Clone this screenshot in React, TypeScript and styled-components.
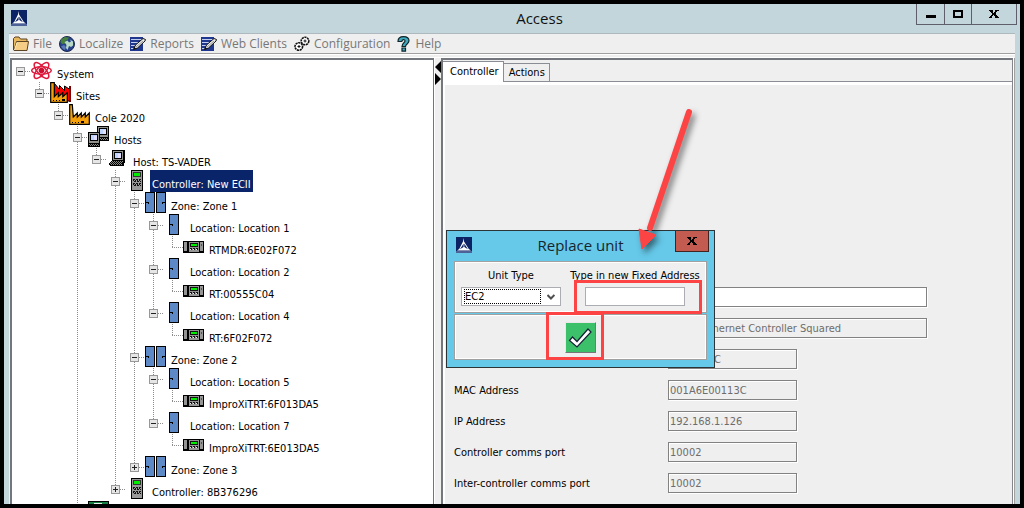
import React from "react";
import styled, { createGlobalStyle, css } from "styled-components";

const ui = '"DejaVu Sans Condensed", "DejaVu Sans", sans-serif';
const chrome = '"Open Sans", "Noto Sans", sans-serif';
const dots = "#8c8c8c";

const GlobalStyle = createGlobalStyle`
  * { box-sizing: border-box; }
  body { margin: 0; background: #000; font-family: ${ui}; font-size: 11px; color: #000; }
  button, input, select { font: inherit; color: inherit; }
`;

const Frame = styled.div`
  position: relative;
  display: flex;
  flex-direction: column;
  height: 100vh;
  border: 4px solid #000;
  background: #c3d6dc;
  overflow: hidden;
`;

const TitleBar = styled.header`
  display: flex;
  align-items: flex-start;
  height: 29px;
  flex: none;
  padding: 0 3px 0 7px;
`;

const TitleLogo = styled.div`
  display: flex;
  padding-top: 6px;
`;

const Title = styled.h1`
  flex: 1;
  margin: 0;
  padding-left: 136px;
  font: 400 15px/29px ${chrome};
  text-align: center;
  color: #111;
`;

const WindowButtons = styled.div`
  display: flex;
  border: 1px solid #5f5f6b;
  border-top: 0;
`;

const WindowButton = styled.button<{ $wide?: boolean }>`
  display: flex;
  align-items: center;
  justify-content: center;
  width: ${(p) => (p.$wide ? 45 : 27)}px;
  height: 20px;
  padding: 0;
  border: 0;
  background: transparent;
  & + & { border-left: 1px solid #5f5f6b; }
`;

const Client = styled.div`
  display: flex;
  flex-direction: column;
  flex: 1;
  min-height: 0;
  margin: 0 5px;
  background: #efefef;
`;

const MenuBar = styled.nav`
  display: flex;
  align-items: center;
  gap: 7px;
  height: 21px;
  flex: none;
  padding-left: 4px;
  border-top: 1px solid #aeb8bf;
  border-bottom: 1px solid #a0a0a0;
  box-shadow: 0 1px #fff;
`;

const MenuButton = styled.button`
  display: flex;
  align-items: center;
  gap: 4px;
  padding: 0;
  border: 0;
  background: transparent;
  font: 12px/18px ${chrome};
  color: #777;
`;

const Split = styled.div`
  display: grid;
  grid-template-columns: 424px 7px minmax(0, 1fr);
  flex: 1;
  min-height: 0;
  margin: 3px 1px 0;
  border-top: 1px solid #fff;
`;

const TreePanel = styled.div`
  overflow: hidden;
  padding-left: 4px;
  border: 2px solid #74767d;
  border-right-width: 1px;
  border-bottom: 0;
  background: #fff;
`;

const Splitter = styled.div`
  display: flex;
  flex-direction: column;
  padding-top: 3px;
  border-left: 1px solid #fff;
`;

const Branch = styled.ul<{ $line?: boolean; $root?: boolean }>`
  list-style: none;
  margin: 0;
  padding: 0 0 0 ${(p) => (p.$root ? 0 : 19)}px;
  ${(p) =>
    p.$line &&
    css`
      background: repeating-linear-gradient(to bottom, ${dots} 0 1px, transparent 1px 2px) 4px 0 / 1px 100% no-repeat;
    `}
`;

const Row = styled.div`
  display: flex;
  align-items: flex-start;
  height: 22px;
`;

const Rail = styled.div`
  display: flex;
  flex-direction: column;
  align-items: center;
  width: 9px;
  height: 22px;
`;

const VDots = styled.i<{ $h: number; $on: boolean }>`
  width: 1px;
  height: ${(p) => p.$h}px;
  background: ${(p) => (p.$on ? `repeating-linear-gradient(to bottom, ${dots} 0 1px, transparent 1px 2px)` : "none")};
`;

const HDots = styled.i<{ $leaf?: boolean }>`
  width: ${(p) => (p.$leaf ? 11 : 6)}px;
  height: 1px;
  margin-top: 11px;
  margin-left: ${(p) => (p.$leaf ? -5 : 0)}px;
  background: repeating-linear-gradient(to right, ${dots} 0 1px, transparent 1px 2px);
`;

const Toggle = styled.button`
  display: flex;
  flex: none;
  width: 9px;
  height: 9px;
  padding: 0;
  border: 1px solid #989898;
  background: #e6e6e6;
`;

const NodeLabel = styled.span<{ $selected?: boolean }>`
  height: 22px;
  margin-left: 2px;
  padding: 8px 2px 0;
  line-height: 14px;
  white-space: nowrap;
  ${(p) => p.$selected && "background: #0a246a; color: #fff;"}
`;

const Pane = styled.main`
  display: flex;
  flex-direction: column;
  min-width: 0;
  margin-right: 1px;
  border: 2px solid #74767d;
  border-right: 1px solid #83858c;
  border-bottom: 0;
  box-shadow: 1px 0 #fff, 2px 0 #a0a0a0;
`;

const Tabs = styled.div`
  display: flex;
  align-items: flex-end;
  height: 22px;
  padding-top: 1px;
  box-shadow: inset 0 -1px #8b8d94;
`;

const Tab = styled.button<{ $active?: boolean }>`
  height: ${(p) => (p.$active ? 21 : 19)}px;
  padding: 0 4px 0 5px;
  border: 1px solid #8b8d94;
  border-left: 0;
  border-bottom-width: ${(p) => (p.$active ? 0 : 1)}px;
  background: ${(p) => (p.$active ? "#fff" : "#efefef")};
  ${(p) => p.$active && "padding: 0 4px 2px 7px;"}
`;

const TabBody = styled.div`
  flex: 1;
  padding: 202px 10px 0 9px;
  border-top: 3px solid #fff;
  border-left: 2px solid #fff;
`;

const Form = styled.form`
  display: grid;
  gap: 11px;
`;

const FormRow = styled.label`
  display: grid;
  grid-template-columns: 214px minmax(0, 1fr);
  align-items: center;
  height: 20px;
`;

const Field = styled.input<{ $wide?: boolean }>`
  width: ${(p) => (p.$wide ? 259 : 129)}px;
  height: 20px;
  padding: 0 1px;
  border: 1px solid #828282;
  border-radius: 0;
  outline: 0;
  background: #fff;
  box-shadow: 1px 1px #fff;
  &:disabled {
    background: #efefef;
    color: #6d6d6d;
    box-shadow: 1px 1px #fff, inset 1px 1px #fff;
  }
`;

const Dialog = styled.section`
  position: absolute;
  left: 442px;
  top: 226px;
  width: 269px;
  padding: 0 7px 7px;
  border: 1px solid #2c3438;
  background: #66c9e9;
`;

const DialogHead = styled.div`
  display: flex;
  align-items: flex-start;
  height: 30px;
  padding-left: 2px;
`;

const DialogTitle = styled.h2`
  flex: 1;
  margin: 0;
  padding-left: 14px;
  font: 400 15px/29px ${chrome};
  text-align: center;
  color: #17262e;
`;

const DialogClose = styled.button`
  display: flex;
  align-items: center;
  justify-content: center;
  width: 34px;
  height: 21px;
  margin-right: -2px;
  padding: 0;
  border: 1px solid #43221f;
  border-top: 0;
  background: #c35b51;
`;

const Group = styled.div`
  display: flex;
  justify-content: center;
  border: 1px solid #a0a0a0;
  background: #efefef;
  box-shadow: inset 1px 1px #fff, inset -1px -1px #fff;
  & + & { margin-top: 1px; }
`;

const Inputs = styled(Group)`
  justify-content: flex-start;
  gap: 10px;
  height: 52px;
  padding: 6px;
`;

const Confirm = styled(Group)`
  align-items: center;
  height: 46px;
`;

const DialogField = styled.label<{ $wide?: boolean }>`
  display: flex;
  flex: none;
  flex-direction: column;
  align-items: center;
  gap: 3px;
  width: ${(p) => (p.$wide ? 128 : 100)}px;
  line-height: 16px;
  white-space: nowrap;
`;

const Combo = styled.span`
  display: flex;
  align-items: center;
  gap: 6px;
  width: 100px;
  height: 20px;
  padding: 0 5px 0 2px;
  border: 1px solid #abadb3;
  background: #fff;
`;

const UnitSelect = styled.select`
  appearance: none;
  width: 78px;
  height: 15px;
  padding: 0;
  border: 1px dotted #000;
  border-radius: 0;
  outline: 0;
  background: #fff;
  line-height: 13px;
`;

const AddressInput = styled.input`
  width: 100px;
  height: 20px;
  border: 1px solid #abadb3;
  outline: 0;
  background: #fff;
`;

const OkButton = styled.button`
  display: flex;
  width: 31px;
  height: 31px;
  padding: 0;
  border: 1px solid #777;
  border-top-color: #e8e8e8;
  border-left-color: #e8e8e8;
  background: #3dc06a;
`;

const Highlight = styled.div<{ $x: number; $y: number; $w: number; $h: number }>`
  position: absolute;
  left: ${(p) => p.$x}px;
  top: ${(p) => p.$y}px;
  width: ${(p) => p.$w}px;
  height: ${(p) => p.$h}px;
  border: 3px solid #fd4444;
  pointer-events: none;
`;

const Arrow = styled.svg`
  position: absolute;
  left: 626px;
  top: 96px;
  pointer-events: none;
  filter: drop-shadow(3px 4px 3px rgba(0, 0, 0, 0.5));
`;

const Logo = () => (
  <svg width="16" height="16" viewBox="0 0 16 16">
    <path fill="#0b2265" d="M0 0h16v16H0z" />
    <path fill="#fff" d="M7.5 1 8 4.5 12.8 12 15 13.6H1L3.2 12 7 4.5z" />
    <path fill="#0b2265" d="M7.6 6.5 7.6 10 4 12.3zM8.3 6.5V10l3.6 2.3z" />
    <path fill="#91a2c9" d="M0 14.5h16v1H0z" />
  </svg>
);

const CloseGlyph = () => (
  <svg width="10" height="8" viewBox="0 0 10 8" shapeRendering="crispEdges">
    <path fill="#000" d="M0 0h4v1H0zM6 0h4v1H6zM1 1h3v1H1zM6 1h2v1H6zM2 2h2v1H2zM5 2h2v1H5zM3 3h4v2H3zM2 5h2v1H2zM5 5h3v1H5zM1 6h2v1H1zM6 6h3v1H6zM0 7h3v1H0zM6 7h4v1H6z" />
  </svg>
);

const FolderIcon = () => (
  <svg width="16" height="16" viewBox="0 0 16 16">
    <path d="M.5 14V2.5L2 1h4l1.500 2H14v3" fill="#e8b75e" stroke="#5b4425" />
    <path d="M3.500 5.500h12l-1.500 9H1z" fill="#f6cd85" stroke="#5b4425" />
    <path d="M1.500 14 4 6.500" stroke="#fff0c8" />
  </svg>
);

const GlobeIcon = () => (
  <svg width="16" height="16" viewBox="0 0 16 16">
    <circle cx="8" cy="8" r="7.500" fill="#27418b" stroke="#1b2850" />
    <path d="M2 3.500 6 1l4 .5L8.500 4 6 5l.5 2.500L3 8 1.500 6z" fill="#48803e" />
    <path d="m5.500 6 3-1.500 1.500 2 2-1-1-2 3 2v4l-2 1.500-2-1-1.500 4L7 12l.5-3z" fill="#b7d9c6" />
    <path d="M2 10.500 5 9l2 2-1 3-2-1z" fill="#5b79b6" />
  </svg>
);

const ReportIcon = () => (
  <svg width="16" height="16" viewBox="0 0 16 16">
    <path fill="#20378f" d="M0 1h13v14H0z" />
    <path stroke="#c3cfee" d="M1 3.500h11M1 6.500h9M1 9.500h5M1 12.500h3" />
    <path d="m3.500 13.500 2-4.500L13 2.500l2.500 1L15 5l-7.500 7z" fill="#ececec" stroke="#111" />
    <path d="m3 14 3-1.500L4.500 11z" fill="#111" />
    <path d="m6 11 7-6" stroke="#999" />
  </svg>
);

const GearsIcon = () => (
  <svg width="16" height="16" viewBox="0 0 16 16" fill="none" stroke="#111">
    <circle cx="4.800" cy="10.500" r="3.800" strokeWidth="1.600" strokeDasharray="2.200 .6" fill="#fff" />
    <circle cx="11" cy="5" r="3.800" strokeWidth="1.600" strokeDasharray="2.200 .6" fill="#fff" />
    <path d="M3.500 10.500h3M5 9v3M9.500 5h3M11 3.500v3" />
  </svg>
);

const HelpIcon = () => (
  <svg width="14" height="16" viewBox="0 0 14 16">
    <path d="M1 5.500C1 2 3.500.6 6.500.6c3.500 0 5.500 1.600 5.500 4.200 0 3-3.500 3.200-3.500 5.700H5C5 7 8 6.700 8 5c0-2-3-2-3.200.5z" fill="#3fa9be" stroke="#10262b" strokeWidth="1.200" />
    <path d="M5 12h3.500v3.200H5z" fill="#3fa9be" stroke="#10262b" strokeWidth="1.200" />
  </svg>
);

const NodeSvg = ({ children, smooth }: { children: React.ReactNode; smooth?: boolean }) => (
  <svg width="22" height="22" viewBox="0 0 22 22" shapeRendering={smooth ? "auto" : "crispEdges"}>
    {children}
  </svg>
);

const Atom = () => (
  <NodeSvg smooth>
    <g fill="none" stroke="#e0193c" strokeWidth="1.500">
      <ellipse cx="10.500" cy="10.500" rx="9.800" ry="3.700" />
      <ellipse cx="10.500" cy="10.500" rx="10" ry="4" transform="rotate(48 10.500 10.500)" />
      <ellipse cx="10.500" cy="10.500" rx="10" ry="4" transform="rotate(-48 10.500 10.500)" />
    </g>
    <circle cx="10.500" cy="10.500" r="2.800" fill="#d10f30" />
  </NodeSvg>
);

const Factory = ({ red }: { red?: boolean }) => (
  <NodeSvg smooth>
    {red && <path d="M4.500 14V1.500l5 6V3.500l5 5V4l5.500 3.500V19H6z" fill="#f00" stroke="#000" />}
    {red && <path d="M20 4v16" stroke="#700" strokeWidth="2" />}
    <path
      d={red ? "M.7 20.300V.7h3.600v14l4-4v4l4.500-4v4l4.500-4V20.300z" : "M.7 20.300V.7h2.600l1 12.300 4-4v4l4-4v4l4-4v4l4-4V20.300z"}
      fill="#f5a00a"
      stroke="#000"
      strokeWidth="1.200"
    />
    <path d="M3 18h1v1H3zM6 18h1v1H6zM9 18h1v1H9zM12 17h3v2h-3z" fill="#000" />
  </NodeSvg>
);

const PcShape = () => (
  <>
    <path fill="#000" d="M0 0h12v15H0z" />
    <path fill="#92928c" d="M1 1h10v10H1z" />
    <path fill="#000" d="M2 2h8v7H2z" />
    <path fill="#bcd4ff" d="M3 3h6v5H3z" />
    <path fill="#e6e0ff" d="M6 4h3v4H6z" />
    <path stroke="#8c8c86" strokeDasharray="1 1" d="M1 12.500h10M2 13.500h9" />
  </>
);

const Hosts = () => (
  <NodeSvg>
    <g transform="translate(9 0)"><PcShape /></g>
    <g transform="translate(0 6)"><PcShape /></g>
  </NodeSvg>
);

const Host = () => (
  <NodeSvg>
    <path fill="#000" d="M5 2h13v11l-1 5H3l-1-2 3-4z" />
    <path fill="#92928c" d="M6 3h10v9H6z" />
    <path fill="#000" d="M7 4h8v7H7z" />
    <path fill="#bcd4ff" d="M8 5h6v5H8z" />
    <path fill="#e6e0ff" d="M11 6h3v4h-3z" />
    <path stroke="#8c8c86" strokeDasharray="1 1" d="M5 13.500h11M4 14.500h12M3 15.500h12M4 16.500h11" />
  </NodeSvg>
);

const ControllerIcon = () => (
  <NodeSvg>
    <path fill="#000" d="M5 0h12v21H5z" />
    <path fill="#999" d="M6 1h10v19H6z" />
    <path fill="#333" d="M7 2h8v5H7z" />
    <path fill="#0e0" d="M8 3h6v3H8z" />
    <path stroke="#111" strokeDasharray="2 1" d="M7 9.500h8M8 11.500h7M7 13.500h8M8 15.500h7" />
    <path stroke="#111" strokeDasharray="1 1" d="M7 10.500h8M7 14.500h8" />
  </NodeSvg>
);

const Door = () => (
  <NodeSvg>
    <path fill="#000" d="M5 0h10v21H5z" />
    <path fill="#5d8ac6" d="M6 1h8v19H6z" />
    <path fill="#000" d="M6 10h3v1H6zM8 11h1v1H8z" />
  </NodeSvg>
);

const Zone = () => (
  <NodeSvg>
    <path fill="#000" d="M0 0h10v21H0zM11 0h10v21H11z" />
    <path fill="#5d8ac6" d="M1 1h8v19H1zM12 1h8v19H12z" />
    <path fill="#000" d="M1 10h3v1H1zM3 11h1v1H3zM17 10h3v1H17zM17 11h1v1H17z" />
  </NodeSvg>
);

const Reader = () => (
  <NodeSvg>
    <path fill="#000" d="M0 5h21v12H0z" />
    <path fill="#959595" d="M1 6h3v9H1zM6 6h10v10H6zM17 6h3v9H17z" />
    <path fill="#111" d="M7 7h8v4H7z" />
    <path fill="#0e0" d="M8 8h6v2H8z" />
    <path fill="#111" d="M7 12h2v2H7zM10 12h2v2h-2zM13 12h2v2h-2z" />
    <path fill="#eee" d="M7 13h1v1H7zM10 13h1v1h-1zM13 13h1v1h-1z" />
    <path fill="#c22" d="M18 8h1v2H18z" />
  </NodeSvg>
);

const Emblem = () => (
  <NodeSvg>
    <path fill="#000" d="M0 1h21v21H0z" />
    <path fill="#178043" d="M1 2h19v20H1z" />
    <path fill="#e6f2ea" d="M6 3h8v2H6zM5 4h3v3H5zM13 4h3v3h-3z" />
  </NodeSvg>
);

type Node = { icon: React.ReactNode; label: string; selected?: boolean; closed?: boolean; items?: Node[] };

const location = (n: number, reader: string): Node => ({
  icon: <Door />,
  label: `Location: Location ${n}`,
  items: [{ icon: <Reader />, label: reader }],
});

const tree: Node[] = [
  {
    icon: <Atom />, label: "System", items: [{
      icon: <Factory red />, label: "Sites", items: [{
        icon: <Factory />, label: "Cole 2020", items: [
          {
            icon: <Hosts />, label: "Hosts", items: [{
              icon: <Host />, label: "Host: TS-VADER", items: [
                {
                  icon: <ControllerIcon />, label: "Controller: New ECII", selected: true, items: [
                    {
                      icon: <Zone />, label: "Zone: Zone 1",
                      items: [location(1, "RTMDR:6E02F072"), location(2, "RT:00555C04"), location(4, "RT:6F02F072")],
                    },
                    {
                      icon: <Zone />, label: "Zone: Zone 2",
                      items: [location(5, "ImproXiTRT:6F013DA5"), location(7, "ImproXiTRT:6E013DA5")],
                    },
                    { icon: <Zone />, label: "Zone: Zone 3", closed: true },
                  ],
                },
                { icon: <ControllerIcon />, label: "Controller: 8B376296", closed: true },
              ],
            }],
          },
          { icon: <Emblem />, label: "", closed: true },
        ],
      }],
    }],
  },
];

function TreeNode({ node, last, root }: { node: Node; last: boolean; root?: boolean }) {
  const leaf = !node.items && !node.closed;
  return (
    <li>
      <Row>
        <Rail>
          <VDots $h={leaf ? 11 : 7} $on={!root} />
          {!leaf && (
            <Toggle aria-label={node.closed ? "Expand" : "Collapse"}>
              <svg width="7" height="7" viewBox="0 0 7 7" shapeRendering="crispEdges">
                <path fill="#222" d={node.closed ? "M1 3h5v1H1zM3 1h1v5H3z" : "M1 3h5v1H1z"} />
              </svg>
            </Toggle>
          )}
          {!leaf && <VDots $h={6} $on={!last} />}
        </Rail>
        <HDots $leaf={leaf} />
        {node.icon}
        {node.label && <NodeLabel $selected={node.selected}>{node.label}</NodeLabel>}
      </Row>
      {node.items && (
        <Branch $line={!last}>
          {node.items.map((n, i) => (
            <TreeNode key={i} node={n} last={i === node.items!.length - 1} />
          ))}
        </Branch>
      )}
    </li>
  );
}

const menu = [
  { icon: <FolderIcon />, text: "File" },
  { icon: <GlobeIcon />, text: "Localize" },
  { icon: <ReportIcon />, text: "Reports" },
  { icon: <ReportIcon />, text: "Web Clients" },
  { icon: <GearsIcon />, text: "Configuration" },
  { icon: <HelpIcon />, text: "Help" },
];

const fields = [
  { name: "Name", covered: true, value: "", wide: true, editable: true },
  { name: "Type", covered: true, value: "EC 2 - Ethernet Controller Squared", wide: true },
  { name: "Fixed Address", covered: true, value: "0000113C" },
  { name: "MAC Address", value: "001A6E00113C" },
  { name: "IP Address", value: "192.168.1.126" },
  { name: "Controller comms port", value: "10002" },
  { name: "Inter-controller comms port", value: "10002" },
];

export default function App() {
  return (
    <>
      <GlobalStyle />
      <Frame>
        <TitleBar>
          <TitleLogo><Logo /></TitleLogo>
          <Title>Access</Title>
          <WindowButtons>
            <WindowButton aria-label="Minimize">
              <svg width="10" height="8" viewBox="0 0 10 8"><path d="M0 5h10v3H0z" /></svg>
            </WindowButton>
            <WindowButton aria-label="Maximize">
              <svg width="10" height="8" viewBox="0 0 10 8"><path fill="none" stroke="#000" strokeWidth="2" d="M1 1h8v6H1z" /></svg>
            </WindowButton>
            <WindowButton $wide aria-label="Close"><CloseGlyph /></WindowButton>
          </WindowButtons>
        </TitleBar>
        <Client>
          <MenuBar>
            {menu.map((m) => (
              <MenuButton key={m.text}>{m.icon}{m.text}</MenuButton>
            ))}
          </MenuBar>
          <Split>
            <TreePanel>
              <Branch $root>
                {tree.map((n) => <TreeNode key={n.label} node={n} last root />)}
              </Branch>
            </TreePanel>
            <Splitter>
              <svg width="6" height="24" viewBox="0 0 6 24"><path d="M6 0v12L0 6zM0 12v12l6-6z" /></svg>
            </Splitter>
            <Pane>
              <Tabs role="tablist">
                <Tab $active role="tab" aria-selected>Controller</Tab>
                <Tab role="tab" aria-selected={false}>Actions</Tab>
              </Tabs>
              <TabBody>
                <Form>
                  {fields.map((f) => (
                    <FormRow key={f.name}>
                      <span>{f.covered ? "" : f.name}</span>
                      <Field aria-label={f.name} $wide={f.wide} disabled={!f.editable} defaultValue={f.value} />
                    </FormRow>
                  ))}
                </Form>
              </TabBody>
            </Pane>
          </Split>
        </Client>

        <Dialog role="dialog" aria-labelledby="replace-title">
          <DialogHead>
            <TitleLogo><Logo /></TitleLogo>
            <DialogTitle id="replace-title">Replace unit</DialogTitle>
            <DialogClose aria-label="Close"><CloseGlyph /></DialogClose>
          </DialogHead>
          <Inputs>
            <DialogField>
              Unit Type
              <Combo>
                <UnitSelect defaultValue="EC2"><option>EC2</option></UnitSelect>
                <svg width="8" height="6" viewBox="0 0 8 6"><path d="m.5 1 3.500 3.500L7.500 1" fill="none" stroke="#505050" strokeWidth="2" /></svg>
              </Combo>
            </DialogField>
            <DialogField $wide>
              Type in new Fixed Address
              <AddressInput />
            </DialogField>
          </Inputs>
          <Confirm>
            <OkButton aria-label="Confirm">
              <svg width="29" height="29" viewBox="0 0 29 29">
                <path d="m3.500 17.500 3-3.500 4.500 4.500L22 6l3 3L11 24z" fill="#fff" stroke="#123" strokeWidth="1.200" />
              </svg>
            </OkButton>
          </Confirm>
          <Highlight $x={127} $y={49} $w={128} $h={34} />
          <Highlight $x={99} $y={81} $w={58} $h={48} />
        </Dialog>

        <Arrow width="80" height="170" viewBox="0 0 80 170">
          <path d="M59 12 20 128" stroke="#fd4444" strokeWidth="6" strokeLinecap="round" />
          <path d="m9 129 17 6-14 14z" fill="#fd4444" stroke="#fd4444" />
        </Arrow>
      </Frame>
    </>
  );
}
